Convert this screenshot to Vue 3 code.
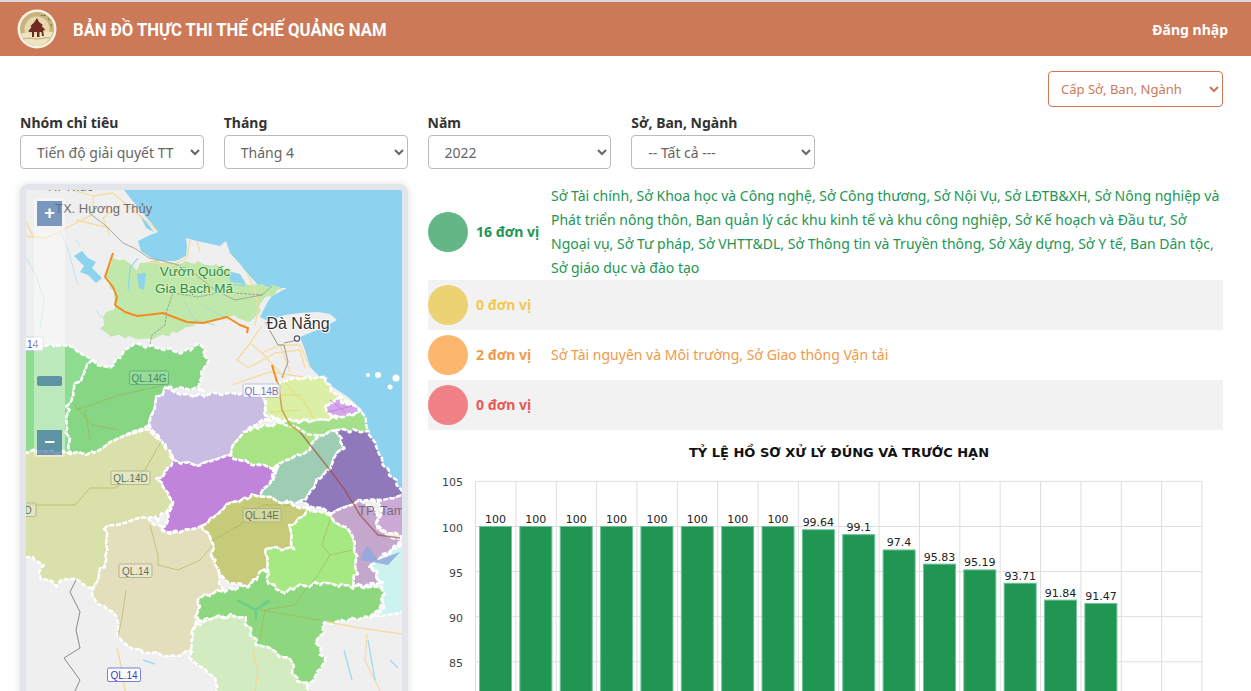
<template>
  <div class="page">
    <!-- Header -->
    <header class="topbar">
      <div class="brand">
        <svg class="logo" viewBox="0 0 40 40" width="40" height="40">
          <circle cx="20" cy="20" r="19.500" fill="#f8f3e2" />
          <circle cx="20" cy="20" r="17" fill="#c9b27c" />
          <circle cx="20" cy="20" r="12.500" fill="#e6d9ae" />
          <path d="M4 25c6-3 11 1 16 0s10-3 16-2c-2 8-9 14-16 14S6 32 4 25z" fill="#efe4c2" />
          <path d="M6 30c5-2 9 0 14 0s9-2 13-1" fill="none" stroke="#b4965a" stroke-width="0.800" />
          <path d="M20 9l2 4 4 3-1.500 1 4 4-2.500.5 1 5.500h-2l-.5-4h-2v5h-2.500v-5h-3v5H15v-5h-3l-.5-1 3-4-1-1 3.500-3.500z" fill="#6e2a22" />
          <path d="M24 6.500h5M31 9l2 3M34 15l.5 3" fill="none" stroke="#6f5a30" stroke-width="1" stroke-dasharray="1 .6" />
        </svg>
        <span class="brand-title">BẢN ĐỒ THỰC THI THỂ CHẾ QUẢNG NAM</span>
      </div>
      <a class="login">Đăng nhập</a>
    </header>

    <div class="content">
      <div class="level-row">
        <select class="level-select">
          <option>Cấp Sở, Ban, Ngành</option>
        </select>
      </div>

      <!-- Filters -->
      <div class="filters">
        <div v-for="f in filters" :key="f.label" class="filter">
          <label>{{ f.label }}</label>
          <select class="form-select">
            <option>{{ f.value }}</option>
          </select>
        </div>
      </div>

      <div class="main-row">
        <!-- Map -->
        <div class="map-card">
          <svg class="map" viewBox="26 190 376 510" width="376" height="510">
            <rect x="26" y="190" width="376" height="510" fill="#efefef" />
            <!-- sea with the lagoon -->
            <path d="M124 190L139 209L152 224L158 232L150 235L138 241L141 251L150 257L159 261L176 261L186 256L187 247L186 238L197 241L206 243L220 246L226 241L230 253L240 264L247 273L258 285L272 288L287 288L272 296L267 303L260 317L268 321L285 315L300 313L318 312L330 314L337 320L322 328L300 337L305 350L310 367L320 377L333 387L348 397L362 410L367 432L380 458L400 490L402 495L402 190Z" fill="#8dd3f0" />
            <path d="M139 213L148 224L154 232L146 228Z" fill="#8dd3f0" />
            <path d="M74 256L82 251L88 258L96 262L92 268L102 278L96 283L88 275L80 272L84 266Z" fill="#8dd3f0" />
            <path d="M76 240L80 246M60 230L68 250L78 285M26 258L36 275L44 300L40 330M96 310L102 318" fill="none" stroke="#bde3f4" stroke-width="1" />
            <polygon :points="warp(parkPts)" fill="#c0e8aa" />
            <path d="M137 274L146 273L144 290L139 288Z" fill="#8dd3f0" />
            <path d="M138 258L130 268L128 290M228 272L238 276L244 286L232 284Z" fill="none" stroke="#8dd3f0" stroke-width="1.200" />
            <path d="M228 271L240 274L246 284L232 282Z" fill="#8dd3f0" />
            <path d="M183 300L195 320L215 325M203 305L225 318" fill="none" stroke="#a9dcd0" stroke-width="1" />

            <!-- roads -->
            <g fill="none" stroke="#f6dca0" stroke-width="1.300">
              <path d="M26 236L46 238L63 230L93 214L93 196L113 193M26 222L34 238M93 196L72 190M113 193L135 212L150 224L158 232M120 205L103 218L110 235M190 240L187 258L170 266L150 262M197 241L200 252M76 220L110 228" />
              <path d="M247 273L255 290L258 310L255 325M237 360L250 343L262 353L280 345L300 345M250 343L262 326M237 360L248 368L275 353M262 353L285 378M232 385L270 372L310 378M280 345L290 372M300 345L310 367M275 353L300 350L305 368" />
            </g>
            <path d="M89 213L105 225L123 243L136 249L149 258L163 261L175 264L190 270L215 290L235 300L262 295L272 286" fill="none" stroke="#a8a08a" stroke-width="0.900" />
            <path d="M265 322L278 345L284 345L288 362L282 378M284 343L298 340" fill="none" stroke="#8d8d7d" stroke-width="0.900" />
            <path d="M173 293L167 310L165 325L152 335L150 345M173 293L198 297L222 292L262 295" fill="none" stroke="#888" stroke-width="0.700" stroke-dasharray="3 1" />
            <path d="M113 253L105 277L113 287L117 297L115 305L125 312L137 316L147 315L163 313L187 322L203 323L227 317L240 325L248 328L247 333M272 365L277 382" fill="none" stroke="#f58a22" stroke-width="2" stroke-linejoin="round" />

            <!-- Regions -->
            <polygon v-for="r in regions" :key="r.color" :points="warp(r.pts)" :fill="r.color" stroke="#fff" stroke-width="2.500" stroke-dasharray="5 1.600" stroke-linejoin="round" />

            <!-- Roads over regions -->
            <g fill="none" stroke="#a6a94a" stroke-opacity="0.55" stroke-width="1">
              <path d="M76 410L120 395L165 385M85 410L90 440M75 405L92 425L118 430" />
              <path d="M26 505L75 505L90 488L115 488L145 470L162 440" />
              <path d="M150 525L158 555L158 565L178 570L200 560L213 545M126 590L122 618L118 636" />
              <path d="M213 540L240 525L262 505L290 505" />
              <path d="M330 520L322 545L330 555L352 550M330 555L318 575L305 590L295 605L265 610L260 640M260 610L320 620" />
              <path d="M270 395L300 395L315 420M285 382L300 400M270 412L300 410" stroke="#e4d870" stroke-opacity="0.900" />
            </g>
            <path d="M278 382L282 410L290 425L300 432" fill="none" stroke="#c9a848" stroke-width="1.600" />
            <path d="M300 432L330 470L345 490L360 515L378 535L400 538" fill="none" stroke="#a04a3a" stroke-opacity="0.650" stroke-width="1.500" />
            <path d="M330 400L345 412M328 412L352 406" fill="none" stroke="#c583d8" stroke-width="1" />
            <path d="M237 600L256 610L268 600M256 610L256 620M262 606L270 601" fill="none" stroke="#5fce8c" stroke-width="2.500" stroke-opacity="0.750" />
            <path d="M367 545L378 560L400 552L388 565L372 562L360 560Z" fill="#8ea8dc" opacity="0.850" />
            <path d="M327 622L360 628L402 634M367 634L365 660L380 691" fill="none" stroke="#f6dca0" stroke-width="1.300" />
            <path d="M117 648L122 670L125 691M253 650L258 670L255 691" fill="none" stroke="#f0d890" stroke-width="1.200" />
            <path d="M76 580L70 592L80 612L76 630L80 648L64 658L80 680L75 691" fill="none" stroke="#8a8a8a" stroke-width="1" />
            <path d="M344 650L352 680M368 640L375 680M143 660L155 664M390 660L398 668" fill="none" stroke="#9edcf2" stroke-width="1.400" />
            <circle cx="368" cy="375" r="2" fill="#fff" />
            <circle cx="378" cy="375" r="3" fill="#fff" />
            <circle cx="390" cy="387" r="2.500" fill="#fff" />
            <circle cx="396" cy="378" r="3.500" fill="#fff" />

            <!-- Map labels -->
            <text x="55" y="213" class="lbl-town">TX. Hương Thủy</text>
            <text x="48" y="191" class="lbl-town">H. Thúc</text>
            <text x="195" y="276" text-anchor="middle" class="lbl-park">Vườn Quốc</text>
            <text x="194" y="293" text-anchor="middle" class="lbl-park">Gia Bạch Mã</text>
            <text x="298" y="329" text-anchor="middle" class="lbl-city">Đà Nẵng</text>
            <circle cx="297" cy="338.500" r="2.600" fill="#fff" stroke="#556" stroke-width="1.200" />
            <text x="358" y="515" class="lbl-tam">TP. Tam</text>
            <g v-for="s in shields" :key="s.text + s.x">
              <rect :x="s.x" :y="s.y" :width="s.w" height="13.500" rx="1.500" :fill="s.fill" :stroke="s.stroke" stroke-width="0.800" />
              <text :x="s.x + s.w / 2" :y="s.y + 10.500" text-anchor="middle" class="lbl-shield" :fill="s.color">{{ s.text }}</text>
            </g>
          </svg>

          <!-- Zoom control -->
          <div class="zoom-ctl">
            <button class="zoom-btn">+</button>
            <span class="zoom-thumb"></span>
            <button class="zoom-btn">−</button>
          </div>
        </div>

        <!-- Right column -->
        <div class="right-col">
          <div class="legend">
            <div v-for="row in legend" :key="row.color" class="legend-row" :class="{ shaded: row.shaded }">
              <span class="dot" :style="{ background: row.dot }"></span>
              <b class="count" :style="{ color: row.color }">{{ row.count }}</b>
              <span class="names" :style="{ color: row.color }">{{ row.names }}</span>
            </div>
          </div>

          <!-- Chart -->
          <svg class="chart" viewBox="428 430 795 270" width="795" height="270">
            <text x="839" y="456.500" text-anchor="middle" class="chart-title">TỶ LỆ HỒ SƠ XỬ LÝ ĐÚNG VÀ TRƯỚC HẠN</text>
            <line v-for="i in 19" :key="'v' + i" :x1="colX(i - 1)" :x2="colX(i - 1)" y1="481.500" y2="700" stroke="#dedede" />
            <template v-for="t in ticks" :key="t">
              <line x1="475.500" x2="1202" :y1="valY(t)" :y2="valY(t)" stroke="#dedede" />
              <text x="463" :y="valY(t) + 5" text-anchor="end" class="axis">{{ t }}</text>
            </template>
            <template v-for="(v, i) in values" :key="i">
              <rect :x="colX(i) + 4" :y="valY(v)" width="32" :height="700 - valY(v)" fill="#219653" stroke="#6fc19a" />
              <text :x="colX(i) + 20" :y="valY(v) - 3.500" text-anchor="middle" class="bar-val">{{ v }}</text>
            </template>
          </svg>
        </div>
      </div>
    </div>
  </div>
</template>

<script setup>
// Filter dropdowns above the map
const filters = [
  { label: 'Nhóm chỉ tiêu', value: 'Tiến độ giải quyết TT' },
  { label: 'Tháng', value: 'Tháng 4' },
  { label: 'Năm', value: '2022' },
  { label: 'Sở, Ban, Ngành', value: '-- Tất cả ---' }
];

const legend = [
  {
    dot: '#65b687',
    color: '#219653',
    count: '16 đơn vị',
    names: 'Sở Tài chính, Sở Khoa học và Công nghệ, Sở Công thương, Sở Nội Vụ, Sở LĐTB&XH, Sở Nông nghiệp và Phát triển nông thôn, Ban quản lý các khu kinh tế và khu công nghiệp, Sở Kế hoạch và Đầu tư, Sở Ngoại vụ, Sở Tư pháp, Sở VHTT&DL, Sở Thông tin và Truyền thông, Sở Xây dựng, Sở Y tế, Ban Dân tộc, Sở giáo dục và đào tạo'
  },
  { dot: '#ecd273', color: '#f2c94c', count: '0 đơn vị', names: '', shaded: true },
  { dot: '#fdb66e', color: '#f2994a', count: '2 đơn vị', names: 'Sở Tài nguyên và Môi trường, Sở Giao thông Vận tải' },
  { dot: '#f08287', color: '#eb5757', count: '0 đơn vị', names: '', shaded: true }
];

// Chart data
const values = [100, 100, 100, 100, 100, 100, 100, 100, 99.64, 99.1, 97.4, 95.83, 95.19, 93.71, 91.84, 91.47];
const ticks = [105, 100, 95, 90, 85];
const colX = (i) => 475.5 + i * 40.36;
const valY = (v) => 526.5 + (100 - v) * 9.02;

// Makes straight borders look hand-traced: the shift depends only on the
// position, so two districts sharing an edge still meet
const warp = (pts) => {
  const p = pts.split(' ').map((s) => s.split(',').map(Number));
  const out = [];
  p.forEach(([x, y], i) => {
    const [nx, ny] = p[(i + 1) % p.length];
    const steps = Math.max(1, Math.round(Math.hypot(nx - x, ny - y) / 6));
    for (let s = 0; s < steps; s++) {
      const ax = x + ((nx - x) * s) / steps;
      const ay = y + ((ny - y) * s) / steps;
      const dx = 1.8 * Math.sin(ax * 0.31 + ay * 0.47) + 1.1 * Math.sin(ay * 1.3);
      const dy = 1.8 * Math.cos(ax * 0.43 - ay * 0.29) + 1.1 * Math.sin(ax * 1.1);
      out.push(`${(ax + dx).toFixed(1)},${(ay + dy).toFixed(1)}`);
    }
  });
  return out.join(' ');
};

const parkPts = '113,258 125,262 138,268 147,262 173,262 205,264 227,270 247,283 267,287 283,288 262,303 260,313 247,320 233,317 203,323 183,330 150,338 113,337 100,330 107,312 115,310 115,297 105,277';

// Districts, in page coordinates of the map
const regions = [
  { color: '#8edc8f', pts: '20,348 50,346 75,346 78,352 92,360 80,380 67,407 68,440 70,452 20,452' },
  { color: '#86d684', pts: '92,360 110,368 133,343 157,347 180,352 200,343 208,362 198,382 203,390 163,388 147,427 123,437 97,453 70,452 68,440 67,407 80,380' },
  { color: '#c9bde3', pts: '163,388 187,397 213,393 243,393 265,395 265,417 240,437 230,453 200,465 173,460 157,437 147,427' },
  { color: '#a4e08c', pts: '267,420 317,420 333,417 362,410 367,432 337,430 313,440 283,423' },
  { color: '#dcefa6', pts: '265,395 277,383 300,378 323,378 333,390 350,403 337,398 323,407 333,417 317,420 277,420 265,413' },
  { color: '#d3a5ea', pts: '323,407 337,398 360,410 347,417 330,417' },
  { color: '#aae386', pts: '230,453 240,437 253,427 283,423 317,437 313,443 310,450 280,463 277,468 240,460' },
  { color: '#9fcdb3', pts: '277,470 280,463 310,450 313,440 337,430 343,447 333,463 323,477 300,502 283,503 260,495' },
  { color: '#8f79bb', pts: '337,430 367,430 400,490 408,495 377,500 358,502 333,512 300,502 323,477 333,463 343,447' },
  { color: '#dae0aa', pts: '20,452 70,452 97,453 123,437 147,430 167,447 173,462 157,480 173,502 160,520 147,518 105,527 108,555 93,587 70,577 57,585 40,578 42,563 20,553' },
  { color: '#c084da', pts: '157,480 173,460 200,465 230,453 240,460 277,468 260,495 227,505 200,527 180,533 163,530 173,502' },
  { color: '#e3dfbc', pts: '105,527 147,518 163,532 180,533 200,527 213,540 212,553 223,590 200,598 195,620 192,650 175,658 133,648 118,637 117,618 93,597 93,587 108,555' },
  { color: '#c6cb7a', pts: '200,527 227,505 260,495 283,503 307,510 290,528 293,548 265,547 268,567 248,585 223,580 212,553 213,540' },
  { color: '#a6e882', pts: '307,510 320,512 350,530 357,555 353,588 320,583 283,592 268,585 268,567 265,547 293,548 290,528' },
  { color: '#c5a7ce', pts: '333,512 358,502 377,510 377,530 400,540 370,567 382,583 353,588 357,555 350,530 330,518' },
  { color: '#cbaad8', pts: '372,500 408,495 408,537 387,533 377,527 382,510' },
  { color: '#cdf3ee', pts: '408,540 372,567 383,587 383,607 370,618 408,610' },
  { color: '#8dd87e', pts: '197,620 200,598 223,590 248,585 267,570 268,585 283,592 320,583 353,588 383,587 383,603 370,618 327,622 318,642 325,663 308,685 295,677 292,660 257,643 245,618 233,617 213,617' },
  { color: '#d3ebc0', pts: '195,625 213,617 245,618 257,643 292,660 295,677 308,685 312,700 215,700 217,680 190,657 192,643' }
];

const grayShield = { fill: 'rgba(255,255,255,0.25)', stroke: '#a9a98e', color: '#66705f' };
const shields = [
  { text: 'QL.14G', x: 129.5, y: 371, w: 39, fill: 'rgba(255,255,255,0.15)', stroke: '#5da878', color: '#3f8a6b' },
  { text: 'QL.14B', x: 243, y: 384, w: 37, fill: 'rgba(255,255,255,0.7)', stroke: '#b4b4dc', color: '#7070c0' },
  { text: 'QL.14D', x: 111, y: 471, w: 39, ...grayShield },
  { text: 'QL.14E', x: 243, y: 508.5, w: 38, ...grayShield },
  { text: 'QL.14', x: 119, y: 564, w: 33, ...grayShield },
  { text: 'D', x: 20, y: 503, w: 16, ...grayShield },
  { text: 'L.14', x: 14, y: 337, w: 29, fill: '#fff', stroke: '#c4c4ec', color: '#4a4ac4' },
  { text: 'QL.14', x: 107.5, y: 668, w: 33, fill: '#fff', stroke: '#5a5ad0', color: '#3a3ac0' }
];
</script>

<style>
html, body {
  margin: 0;
  overflow: hidden;
  background: #fff;
}
</style>

<style scoped>
.page {
  width: 1251px;
  height: 691px;
  overflow: hidden;
  font-family: "Noto Sans", sans-serif;
  font-size: 14px;
  color: #333;
  border-top: 2px solid #d9d9d9;
  box-sizing: border-box;
}

.topbar {
  height: 54px;
  background: #cc7958;
  display: flex;
  align-items: center;
  justify-content: space-between;
  padding: 0 23px 0 17px;
}

.brand {
  display: flex;
  align-items: center;
  gap: 16px;
}

.brand-title {
  display: inline-block;
  font-family: Roboto, sans-serif;
  font-weight: 700;
  font-size: 18px;
  color: #fff;
  transform: scaleX(0.926);
  transform-origin: left center;
}

.login {
  color: #fff;
  font-weight: 700;
}

.content {
  padding: 15px 28px 0 20px;
}

.level-row {
  display: flex;
  justify-content: flex-end;
}

.level-select {
  width: 175px;
  height: 36px;
  border: 1px solid #cc7958;
  border-radius: 4px;
  background: #fff;
  color: #cc7958;
  font: 13px "Noto Sans", sans-serif;
  padding-left: 8px;
}

.filters {
  display: flex;
  gap: 20px;
  margin-top: 5px;
}

.filter {
  width: 183.75px;
}

.filter label {
  display: block;
  font-weight: 700;
  line-height: 21px;
  margin-bottom: 2px;
}

.form-select {
  width: 100%;
  height: 34px;
  border: 1px solid #bbb;
  border-radius: 4px;
  background: #fff;
  color: #666;
  font: 14px "Noto Sans", sans-serif;
  padding-left: 12px;
}

.main-row {
  display: grid;
  grid-template-columns: 388px 795px;
  gap: 20px;
  margin-top: 15px;
}

.map-card {
  position: relative;
  height: 522px;
  border: 6px solid #e2e6ea;
  border-radius: 8px;
  box-sizing: border-box;
  box-shadow: 0 0 8px rgba(0, 0, 0, 0.12);
  overflow: hidden;
}

.map {
  display: block;
}

.zoom-ctl {
  position: absolute;
  left: 8px;
  top: 8px;
  width: 31px;
  height: 259px;
  padding-top: 3px;
  box-sizing: border-box;
  border-radius: 3px;
  background: rgba(255, 255, 255, 0.4);
  display: flex;
  flex-direction: column;
  align-items: center;
}

.zoom-btn {
  width: 25px;
  height: 25px;
  padding: 0;
  border: none;
  background: rgba(0, 60, 136, 0.5);
  color: #fff;
  font: 700 18px/25px "Liberation Sans", sans-serif;
}

.zoom-thumb {
  width: 25px;
  height: 10px;
  margin: 150px 0 44px;
  border-radius: 2px;
  background: rgba(0, 60, 136, 0.5);
}

.legend-row {
  display: flex;
  align-items: center;
  min-height: 50px;
}

.legend-row.shaded {
  background: #f2f2f2;
}

.dot {
  flex: none;
  width: 40px;
  height: 40px;
  border-radius: 50%;
}

.count {
  flex: none;
  width: 75px;
  margin: 0 0 2px 8px;
}

.names {
  line-height: 24px;
}

.chart {
  display: block;
}

.chart-title {
  font: 700 13px "DejaVu Sans", sans-serif;
  fill: #111;
}

.axis {
  font: 11px "DejaVu Sans", sans-serif;
  fill: #444;
}

.bar-val {
  font: 11px "DejaVu Sans", sans-serif;
  fill: #222;
}

.lbl-town {
  font: 13px "Liberation Sans", sans-serif;
  fill: #6e6e6e;
}

.lbl-park {
  font: 13.5px "Liberation Sans", sans-serif;
  fill: #2e8b3d;
  stroke: #d8f0c8;
  stroke-width: 2px;
  paint-order: stroke;
}

.lbl-city {
  font: 16px "Liberation Sans", sans-serif;
  fill: #333;
  stroke: #fff;
  stroke-width: 2px;
  paint-order: stroke;
}

.lbl-tam {
  font: 13px "Liberation Sans", sans-serif;
  fill: #7a6a80;
}

.lbl-shield {
  font: 10px "Liberation Sans", sans-serif;
}
</style>
